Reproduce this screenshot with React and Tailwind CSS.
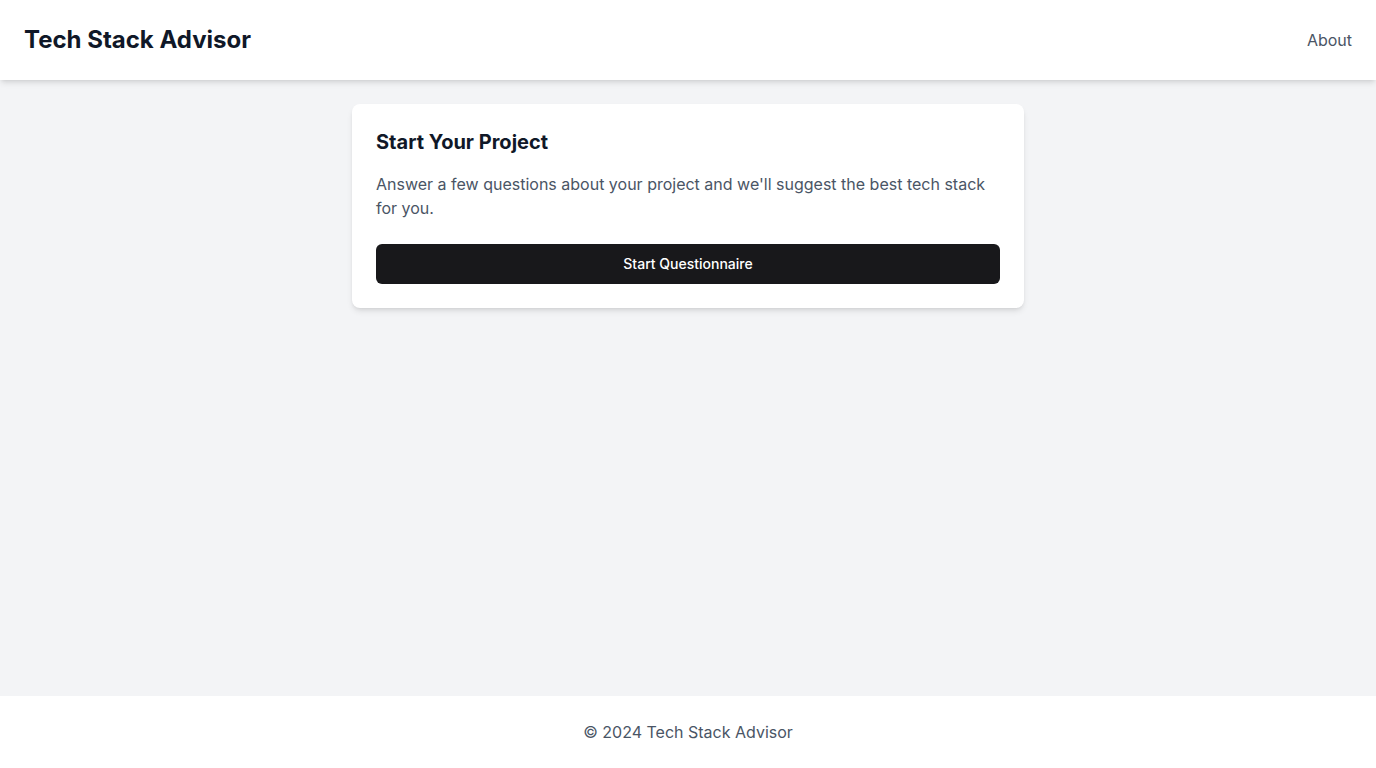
import React from 'react';

export default function App() {
  return (
    <div className="flex min-h-screen flex-col bg-gray-100 font-['Inter',sans-serif]">
      {/* Header */}
      <header className="relative z-10 bg-white shadow-md">
        <div className="flex items-center justify-between px-6 py-6">
          <h1 className="text-2xl font-bold text-gray-900">Tech Stack Advisor</h1>
          <nav>
            <a href="#" className="text-base text-gray-600 hover:text-gray-900">About</a>
          </nav>
        </div>
      </header>

      {/* Main */}
      <main className="flex-1 px-6 py-6">
        <div className="mx-auto max-w-2xl rounded-lg bg-white p-6 shadow-md">
          <h2 className="mb-4 text-xl font-bold text-gray-900">Start Your Project</h2>
          <p className="mb-6 text-base text-gray-600">
            Answer a few questions about your project and we'll suggest the best tech stack for you.
          </p>
          <button className="flex h-10 w-full items-center justify-center rounded-md bg-[#18181b] text-sm font-medium text-white">
            Start Questionnaire
          </button>
        </div>
      </main>

      {/* Footer */}
      <footer className="bg-white py-6 text-center text-base text-gray-600">
        © 2024 Tech Stack Advisor
      </footer>
    </div>
  );
}
